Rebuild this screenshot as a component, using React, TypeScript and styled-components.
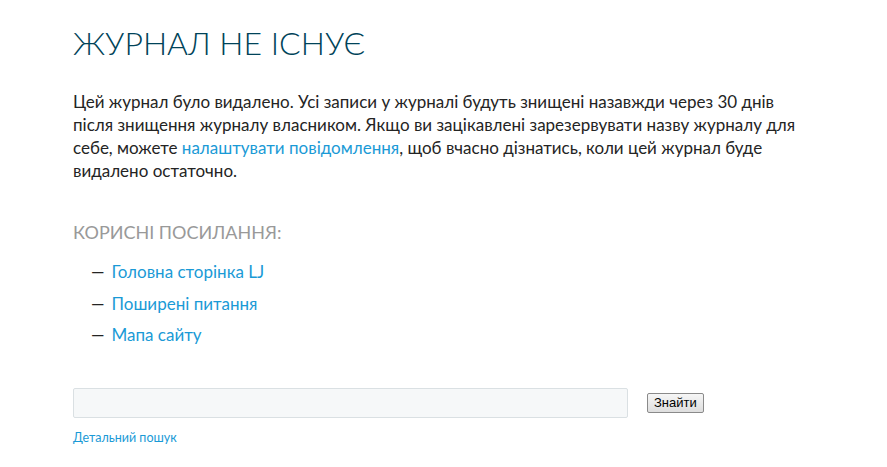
import styled, { createGlobalStyle } from 'styled-components';

const GlobalStyle = createGlobalStyle`
    html, body {
        margin: 0;
        padding: 0;
        background: #fff;
    }
    body {
        font-family: 'Lato', 'Open Sans', sans-serif;
    }
`;

const Page = styled.main`
    padding: 19px 0 0 73px;
    width: 740px;
`;

const Title = styled.h1`
    margin: 0;
    font-size: 32px;
    line-height: 48px;
    font-weight: 300;
    color: #004359;
`;

const Text = styled.p`
    margin: 23px 0 0;
    width: 735px;
    font-size: 17px;
    line-height: 23px;
    color: #242424;
`;

const Link = styled.a<{ $small?: boolean }>`
    color: #1a9ad6;
    text-decoration: none;
    font-size: ${(p) => (p.$small ? '12.5px' : 'inherit')};
`;

const SubTitle = styled.h2`
    margin: 38px 0 0;
    font-size: 18px;
    line-height: 24px;
    font-weight: 400;
    color: #999;
`;

const List = styled.ul`
    list-style: none;
    margin: 12px 0 0;
    padding: 0 0 0 18px;
`;

const Item = styled.li`
    font-size: 17px;
    line-height: 31.5px;
    color: #242424;
    display: flex;
    gap: 7px;
`;

const SearchRow = styled.form`
    display: flex;
    align-items: center;
    gap: 19px;
    margin-top: 37px;
`;

const Input = styled.input`
    box-sizing: border-box;
    width: 555px;
    height: 30px;
    background: #f6f8f9;
    border: 1px solid #dae0e3;
    border-radius: 2px;
    outline: none;
`;

const Button = styled.button`
    font-family: 'Liberation Sans', Arial, sans-serif;
    font-size: 13px;
    font-weight: 400;
    height: 20px;
    padding: 0 6px;
    background: linear-gradient(#f6f6f6, #dedede);
    border: 1px solid #8a8a8a;
    border-radius: 2px;
    color: #000;
`;

const Extra = styled.div`
    margin-top: 10px;
    line-height: 16px;
`;

const links = ['Головна сторінка LJ', 'Поширені питання', 'Мапа сайту'];

const App = () => {
    return (
        <>
            <GlobalStyle />
            <Page>
                <Title>ЖУРНАЛ НЕ ІСНУЄ</Title>
                <Text>
                    Цей журнал було видалено. Усі записи у журналі будуть знищені назавжди через 30 днів після
                    знищення журналу власником. Якщо ви зацікавлені зарезервувати назву журналу для себе, можете{' '}
                    <Link href="#">налаштувати повідомлення</Link>, щоб вчасно дізнатись, коли цей журнал буде
                    видалено остаточно.
                </Text>
                <SubTitle>КОРИСНІ ПОСИЛАННЯ:</SubTitle>
                <List>
                    {links.map((l) => (
                        <Item key={l}>
                            <span>—</span>
                            <Link href="#">{l}</Link>
                        </Item>
                    ))}
                </List>
                <SearchRow onSubmit={(e) => e.preventDefault()}>
                    <Input type="text" />
                    <Button type="submit">Знайти</Button>
                </SearchRow>
                <Extra>
                    <Link href="#" $small>
                        Детальний пошук
                    </Link>
                </Extra>
            </Page>
        </>
    );
};

export default App;
